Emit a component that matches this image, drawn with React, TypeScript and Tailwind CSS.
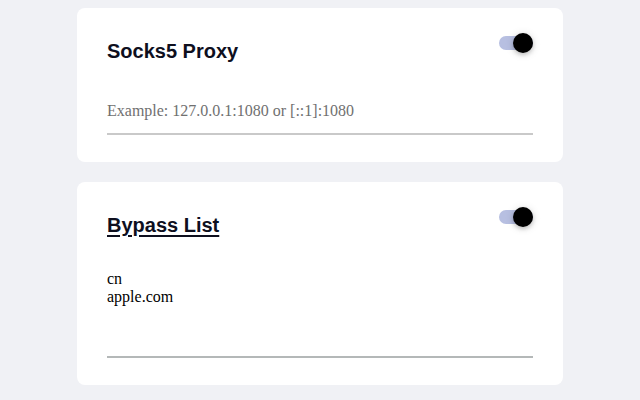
import { useState } from "react";

function Toggle({ on, onChange }: { on: boolean; onChange: (v: boolean) => void }) {
  return (
    <button
      type="button"
      onClick={() => onChange(!on)}
      className="relative flex h-[20px] w-[34px] shrink-0 items-center"
    >
      <span className="block h-[14px] w-[34px] rounded-full bg-[#b7bfe1]" />
      <span
        className={
          on
            ? "absolute right-0 top-0 h-[20px] w-[20px] rounded-full bg-black shadow-[0_2px_4px_rgba(0,0,0,0.2),0_1px_10px_rgba(0,0,0,0.12)]"
            : "absolute left-0 top-0 h-[20px] w-[20px] rounded-full bg-white shadow-[0_2px_4px_rgba(0,0,0,0.2),0_1px_10px_rgba(0,0,0,0.12)]"
        }
      />
    </button>
  );
}

export default function App() {
  const [proxyOn, setProxyOn] = useState(true);
  const [bypassOn, setBypassOn] = useState(true);
  const [proxy, setProxy] = useState("");
  const [bypass, setBypass] = useState("cn\napple.com");

  return (
    <div className="min-h-[400px] w-full bg-[#f0f1f5] px-[77px] pt-2 font-['Liberation_Sans',Arial,sans-serif]">
      {/* socks5 card */}
      <div className="rounded-lg bg-white px-[30px] pb-[27px] pt-[25px]">
        <div className="flex items-start justify-between">
          <h2 className="mt-[7px] text-[20px] font-bold leading-[23px] text-[#0e0f1e]">Socks5 Proxy</h2>
          <Toggle on={proxyOn} onChange={setProxyOn} />
        </div>
        <input
          value={proxy}
          onChange={(e) => setProxy(e.target.value)}
          placeholder="Example: 127.0.0.1:1080 or [::1]:1080"
          className="mt-[39px] block w-full border-b-2 border-[#c9c9c9] bg-transparent pb-[13px] font-['Liberation_Serif','Times_New_Roman',serif] text-[16px] leading-[18px] text-black outline-none placeholder:text-[#707070]"
        />
      </div>

      {/* bypass card */}
      <div className="mt-5 rounded-lg bg-white px-[30px] pb-[27px] pt-[25px]">
        <div className="flex items-start justify-between">
          <a href="#" className="mt-[7px] text-[20px] font-bold leading-[23px] text-[#0e0f1e] underline decoration-2 underline-offset-[3px]">
            Bypass List
          </a>
          <Toggle on={bypassOn} onChange={setBypassOn} />
        </div>
        <textarea
          value={bypass}
          onChange={(e) => setBypass(e.target.value)}
          className="mt-[33px] block h-[88px] w-full resize-none border-b-2 border-[#b4b8b8] bg-transparent p-0 font-['Liberation_Serif','Times_New_Roman',serif] text-[16px] leading-[18px] text-black outline-none"
        />
      </div>
    </div>
  );
}
